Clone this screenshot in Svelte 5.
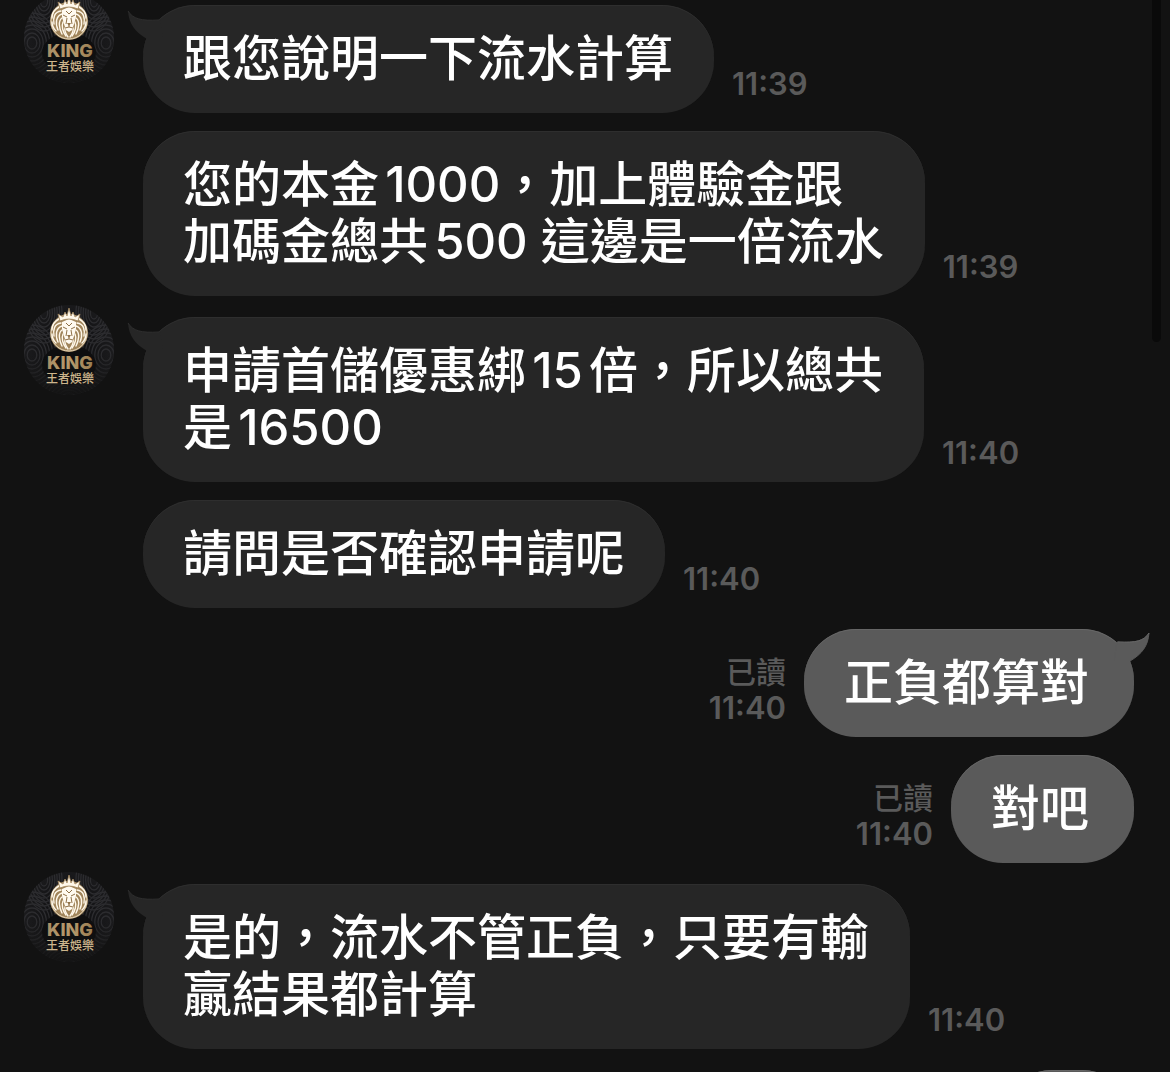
<script>
  const groups = [
    {
      from: 'king',
      messages: [
        { lines: ['跟您說明一下流水計算'], time: '11:39' },
        { lines: ['您的本金1000，加上體驗金跟', '加碼金總共500 這邊是一倍流水'], time: '11:39' }
      ]
    },
    {
      from: 'king',
      messages: [
        { lines: ['申請首儲優惠綁15倍，所以總共', '是16500'], time: '11:40' },
        { lines: ['請問是否確認申請呢'], time: '11:40' }
      ]
    },
    {
      from: 'me',
      messages: [
        { lines: ['正負都算對'], time: '11:40' },
        { lines: ['對吧'], time: '11:40' }
      ]
    },
    {
      from: 'king',
      messages: [{ lines: ['是的，流水不管正負，只要有輸', '贏結果都計算'], time: '11:40' }]
    },
    { from: 'me', messages: [{ lines: [] }] }
  ];

  // engraved rings of the avatar background
  const rings = [6, 10, 14, 18, 22, 26, 30];
</script>

{#snippet mane()}
  <path d="M37 18C30 19 29 25 30 31" />
  <path d="M38 21C32 23 31 30 34 37" />
  <path d="M38 25C34 28 35 35 38 41" />
  <path d="M39 29C37 33 39 39 42 43" />
  <path d="M41 35C40 38 42 41 44 44" />
  <path d="M35 14C31 16 28 20 28 25" />
  <path d="M28 29C28 32 30 36 32 38" />
{/snippet}

{#snippet avatar()}
  <svg class="avatar" viewBox="0 0 90 90" role="img" aria-label="KING 王者娛樂">
    <defs>
      <clipPath id="disc"><circle cx="45" cy="45" r="45" /></clipPath>
      <linearGradient id="gold" x1="0" x2="1">
        <stop offset="0" stop-color="#a98e66" />
        <stop offset="0.5" stop-color="#b79a6c" />
        <stop offset="1" stop-color="#9a7d52" />
      </linearGradient>
      <radialGradient id="shade" cy="0.45">
        <stop offset="0" stop-color="#0c0c0d" />
        <stop offset="0.55" stop-color="#141416" />
        <stop offset="1" stop-color="#1b1b1d" />
      </radialGradient>
      <linearGradient id="fade" x2="0" y2="1">
        <stop offset="0.55" stop-color="#121212" stop-opacity="0" />
        <stop offset="1" stop-color="#121212" stop-opacity="0.9" />
      </linearGradient>
    </defs>
    <g clip-path="url(#disc)">
      <rect width="90" height="90" fill="url(#shade)" />
      <g fill="none" stroke="#2c2c2f" stroke-width="1.3">
        {#each rings as r}
          <ellipse cx="8" cy="50" rx={r * 0.8} ry={r} />
          <ellipse cx="82" cy="50" rx={r * 0.8} ry={r} />
          <ellipse cx="20" cy="8" rx={r * 0.6} ry={r} />
          <ellipse cx="70" cy="8" rx={r * 0.6} ry={r} />
          <ellipse cx="45" cy="92" rx={r} ry={r * 0.7} />
        {/each}
      </g>
      <ellipse cx="45" cy="60" rx="27" ry="20" fill="#0e0e0f" />
      <rect width="90" height="90" fill="url(#fade)" />
    </g>
    <circle cx="45" cy="28" r="19" fill="#a0845a" />
    <circle cx="45" cy="28" r="18" fill="none" stroke="#e6d8bd" />
    <g fill="none" stroke="#fff8ea" stroke-width="1.4" stroke-linecap="round">
      {@render mane()}
      <g transform="matrix(-1 0 0 1 90 0)">{@render mane()}</g>
    </g>
    <path fill="#fffaf0" d="M38 17L45 14L52 17L52 24L50 31L48 37L45 39L42 37L40 31L38 24Z" />
    <g fill="none" stroke="#8e7046" stroke-width="1">
      <path d="M39 22L43 24M51 22L47 24M43 25L42 31M47 25L48 31" />
      <path d="M45 32V34M41 35L45 34L49 35M42 18L45 21L48 18" />
    </g>
    <path fill="#8e7046" d="M43 30H47L45 33Z" />
    <path
      fill="#fff8ea"
      stroke="#a0845a"
      stroke-width="0.8"
      d="M36 16L34 9L39 12L41 7L43 11L45 3L47 11L49 7L51 12L56 9L54 16Q45 12 36 16Z"
    />
    <text class="brand" x="46" y="64" text-anchor="middle">KING</text>
    <text class="brand-sub" x="46" y="78" text-anchor="middle">王者娛樂</text>
  </svg>
{/snippet}

<main class="chat">
  {#each groups as group}
    <section class="group {group.from}">
      {#if group.from === 'king'}
        {@render avatar()}
      {/if}
      <div class="messages">
        {#each group.messages as message, i}
          <div class="row">
            <div class="bubble">
              {#if i === 0}
                <svg class="tail" viewBox="0 0 36 36" aria-hidden="true">
                  <path class="tail-fill" d="M1 2C6 10 14 12 33 11L36 30L20 30C8 23 2 15 1 2Z" />
                  <path class="tail-line" d="M1 2C6 10 14 12 32 11" />
                </svg>
              {/if}
              {#each message.lines as line}
                <p class="line">{line}</p>
              {/each}
            </div>
            {#if message.time}
              <div class="meta">
                {#if group.from === 'me'}<span class="read">已讀</span>{/if}
                <time>{message.time}</time>
              </div>
            {/if}
          </div>
        {/each}
      </div>
    </section>
  {/each}
  <div class="scroll-thumb"></div>
</main>

<style>
  :global(body) {
    margin: 0;
    background: #121212;
  }

  .chat {
    position: relative;
    box-sizing: border-box;
    height: 100vh;
    overflow: hidden;
    display: flex;
    flex-direction: column;
    gap: 9px;
    padding: 0 36px 0 24px;
    background: #121212;
    color: #fff;
    font-family: Inter, 'Noto Sans CJK TC', sans-serif;
  }

  .group {
    display: flex;
    flex-shrink: 0;
    align-items: flex-start;
    gap: 29px;
  }

  .group:first-child {
    margin-top: -7px;
  }

  .group.me {
    justify-content: flex-end;
  }

  .avatar {
    flex: none;
    width: 90px;
    height: 90px;
  }

  .brand {
    fill: url(#gold);
    font-size: 18px;
    font-weight: 800;
  }

  .brand-sub {
    fill: #cdb68d;
    font-size: 12px;
    font-weight: 500;
  }

  .messages {
    display: flex;
    flex-direction: column;
    gap: 18px;
    padding-top: 12px;
  }

  .row {
    display: flex;
    align-items: flex-end;
    gap: 18px;
  }

  .me .row {
    flex-direction: row-reverse;
  }

  .bubble {
    position: relative;
    box-sizing: border-box;
    min-width: 134px;
    min-height: 108px;
    padding: 25px 41px 26px 40px;
    border-radius: 52px;
    background: #262626;
    box-shadow: inset 0 1px #2e2e2e;
  }

  .me .bubble {
    padding-right: 45px;
    background: #5a5a5a;
    box-shadow: inset 0 1px #666;
  }

  .tail {
    position: absolute;
    top: 4px;
    left: -16px;
    width: 36px;
    height: 36px;
  }

  .me .tail {
    top: 2px;
    left: auto;
    right: -16px;
    transform: scaleX(-1);
  }

  .tail-fill {
    fill: #262626;
  }

  .tail-line {
    fill: none;
    stroke: #2e2e2e;
  }

  .me .tail-fill {
    fill: #5a5a5a;
    stroke: #5a5a5a;
    stroke-linejoin: round;
  }

  .me .tail-line {
    stroke: #666;
  }

  .line {
    margin: 0;
    font-size: 49px;
    font-weight: 500;
    line-height: 57px;
    white-space: nowrap;
    text-autospace: normal;
  }

  .meta {
    display: flex;
    flex-direction: column;
    padding-bottom: 11px;
    color: #5a5a5a;
    font-size: 31px;
    font-weight: 600;
    line-height: 36px;
  }

  .me .meta {
    align-items: flex-end;
  }

  .read {
    font-size: 30px;
    font-weight: 500;
  }

  .scroll-thumb {
    position: absolute;
    top: 0;
    right: 9px;
    width: 9px;
    height: 342px;
    border-radius: 0 0 5px 5px;
    background: #0a0a0a;
  }
</style>
